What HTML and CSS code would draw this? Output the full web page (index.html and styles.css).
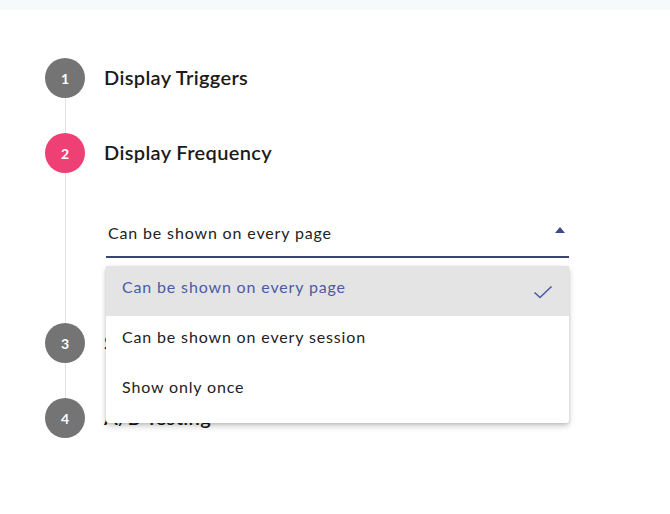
FILE: index.html
```html
<!DOCTYPE html>
<html lang="en">
<head>
  <meta charset="UTF-8" />
  <meta name="viewport" content="width=device-width, initial-scale=1.0" />
  <title>Popup settings</title>
  <link rel="stylesheet" href="styles.css">
</head>
<body>
  <div class="topbar"></div>

  <!-- steps -->
  <ol class="steps">
    <li class="step">
      <div class="rail"><span class="num">1</span><span class="line"></span></div>
      <div class="body"><h2 class="title">Display Triggers</h2></div>
    </li>

    <li class="step active">
      <div class="rail"><span class="num">2</span><span class="line"></span></div>
      <div class="body">
        <h2 class="title">Display Frequency</h2>

        <div class="select open">
          <div class="select-value">
            <span>Can be shown on every page</span>
            <svg class="caret" width="10" height="6" viewBox="0 0 10 6"><path d="M0 6 L5 0 L10 6 Z" fill="#3d4a8c"/></svg>
          </div>
          <ul class="menu">
            <li class="option selected">
              <span>Can be shown on every page</span>
              <svg width="20" height="14" viewBox="0 0 20 14"><path d="M1.5 7.5 L7 12.5 L18.5 1.5" fill="none" stroke="#4c5aa6" stroke-width="1.6"/></svg>
            </li>
            <li class="option"><span>Can be shown on every session</span></li>
            <li class="option"><span>Show only once</span></li>
          </ul>
        </div>
      </div>
    </li>

    <li class="step">
      <div class="rail"><span class="num">3</span><span class="line"></span></div>
      <div class="body"><h2 class="title">Schedule</h2></div>
    </li>

    <li class="step last">
      <div class="rail"><span class="num">4</span></div>
      <div class="body"><h2 class="title">A/B Testing</h2></div>
    </li>
  </ol>
</body>
</html>
```

FILE: styles.css
```css
/* ─── reset ─── */
*,*::before,*::after{box-sizing:border-box;margin:0;padding:0}
html,body{
  width:100%;height:100%;overflow:hidden;background:#fff;
  font-family:Lato,"Noto Sans",sans-serif;color:#1b1b1b;
}
ol,ul{list-style:none}

.topbar{height:10px;background:#f7fafb}

/* ─── steps ─── */
.steps{padding:48px 0 0 45px}
.step{display:flex;gap:19px;min-height:75px}
.step.active{min-height:190px}
.step.last{min-height:40px}

.rail{display:flex;flex-direction:column;align-items:center;width:40px}
.num{
  display:flex;align-items:center;justify-content:center;flex:none;
  width:40px;height:40px;border-radius:50%;
  background:#747474;color:#fff;font-size:14px;font-weight:700;
}
.active .num{background:#ee4074}
.line{flex:1;width:1px;background:#e2e2e2}

.body{flex:1;padding-right:100px}
.title{
  height:40px;display:flex;align-items:center;padding-bottom:2px;
  font-size:20px;font-weight:600;letter-spacing:.35px;color:#1b1b1b;
}

/* ─── select ─── */
.select{position:relative;margin:37px 0 0 2px;width:463px}
.select-value{
  display:flex;align-items:center;justify-content:space-between;
  height:48px;padding:0 4px 2px 2px;
  border-bottom:2px solid #3b4670;
  font-size:16px;letter-spacing:.85px;color:#222;
}
.caret{margin-bottom:4px}

.menu{
  position:absolute;top:56px;left:0;right:0;z-index:10;
  padding-bottom:7px;background:#fff;border-radius:3px;
  box-shadow:0 3px 6px rgba(0,0,0,.2),0 1px 3px rgba(0,0,0,.12);
}
.option{
  display:flex;align-items:center;justify-content:space-between;
  height:50px;padding:0 16px 0 16px;
  font-size:16px;letter-spacing:.85px;color:#222;
}
.option span{margin-top:-10px}
.option.selected{background:#e4e4e4;color:#4c5aa6}
.option.selected svg{margin-top:2px}
```
